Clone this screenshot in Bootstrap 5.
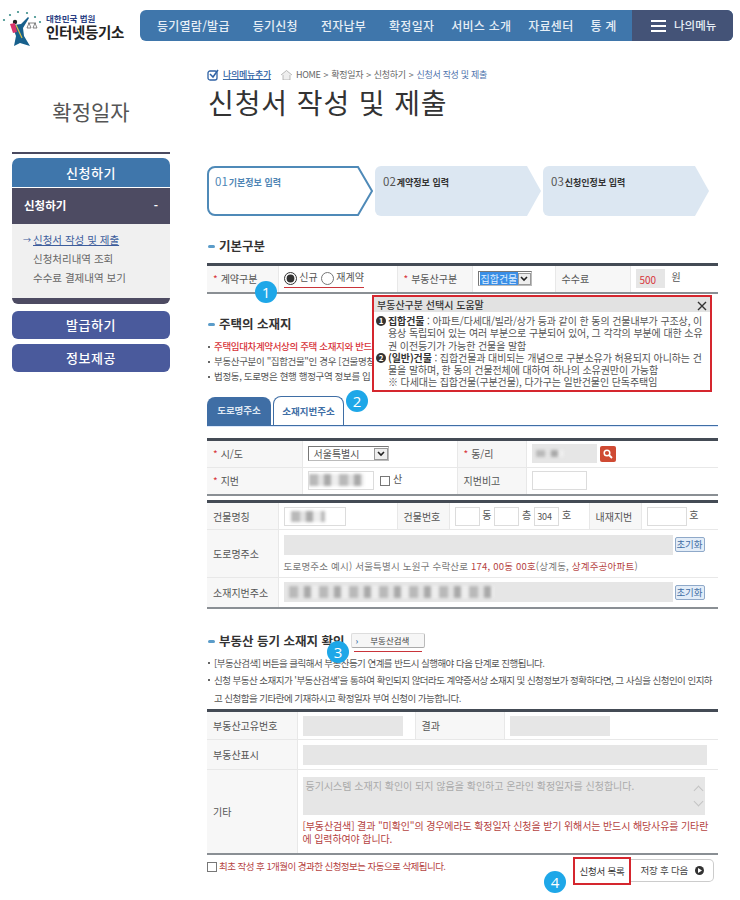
<!DOCTYPE html>
<html lang="ko">
<head>
    <meta charset="UTF-8">
    <meta name="viewport" content="width=device-width, initial-scale=1.0">
    <title>인터넷등기소 - 신청서 작성 및 제출</title>
    <link href="https://cdn.jsdelivr.net/npm/bootstrap@5.3.2/dist/css/bootstrap.min.css" rel="stylesheet">
    <style>
        body { width: 740px; height: 900px; overflow: hidden; font-family: "Noto Sans CJK KR", "Noto Sans", sans-serif; font-size: 10px; color: #555; background: #fff; }
        .site-top { height: 41px; margin-top: 10px; padding: 0 7px 0 2px; }
        .logo-box { width: 138px; height: 38px; margin-top: -2px; gap: 2px; }
        .logo-sub { font-size: 8.5px; font-weight: 700; color: #2b3f83; line-height: 10px; }
        .logo-name { font-size: 14.5px; font-weight: 700; color: #222; line-height: 18px; letter-spacing: -.35px; }
        .gnb { height: 31px; background: #3f76ab; border-radius: 6px; overflow: hidden; color: #e6eef6; font-size: 12px; font-weight: 500; }
        .gnb-items { padding-left: 17px; gap: 23px; letter-spacing: .25px; }
        .gnb-close { margin-left: -6px; }
        .gnb-my { width: 101px; background: #445377; padding-left: 19px; font-size: 11.5px; }
        .shell { padding: 0 22px 0 12px; }
        .side { width: 158px; margin-right: 37px; }
        .side-title { height: 94px; padding-top: 45px; font-size: 21px; color: #555; text-align: center; line-height: 30px; margin-bottom: 7px; }
        .side-line { height: 2px; background: #4a4a60; margin-bottom: 4px; }
        .side-head { height: 29px; line-height: 29px; border-radius: 7px 7px 0 0; background: #3f76ab; color: #fff; font-size: 13px; font-weight: 500; text-align: center; letter-spacing: .6px; }
        .side-sub { height: 37px; background: #4d4b62; color: #fff; font-size: 11.5px; font-weight: 700; padding: 0 12px; border-top: 1px solid #fff; }
        .side-list { height: 74px; background: #f0f0f0; padding: 6px 0 0 21px; font-size: 10.5px; line-height: 19px; color: #666; }
        .side-on { color: #3d5d9c; text-decoration: underline; position: relative; }
        .side-on::before { content: "→"; position: absolute; left: -10px; font-size: 8px; text-decoration: none; display: inline-block; }
        .side-end { height: 6px; background: #4d4b62; border-radius: 0 0 6px 6px; margin-bottom: 7px; }
        .side-btn { height: 28px; line-height: 28px; background: #4a5a9c; color: #fff; font-size: 13px; font-weight: 500; border-radius: 6px; text-align: center; margin-bottom: 5px; letter-spacing: .6px; }
        .content { width: 511px; position: relative; }
        .crumb { height: 14px; margin-top: 17px; font-size: 9px; line-height: 14px; letter-spacing: -.3px; color: #666; }
        .crumb-add { color: #2f62a5; text-decoration: underline; margin-right: 10px; font-weight: 500; }
        .crumb-sep { margin: 0 3px; }
        .crumb-now { color: #4f74ad; }
        .page-title { font-size: 28px; font-weight: 400; color: #333; margin: 2px 0 45px 1px; line-height: 37px; letter-spacing: .9px; }
        .steps { height: 50px; margin-bottom: 22px; gap: 2px; position: relative; z-index: 0; }
        .step-item { width: 166px; height: 50px; position: relative; padding: 7px 0 0 8px; color: #333; font-size: 9px; font-weight: 700; }
        .step-item svg { position: absolute; left: 0; top: 0; z-index: -1; }
        .step-num { font-size: 11.5px; font-weight: 400; color: #555; margin-right: 1px; }
        .step-on { color: #4f86b5; }
        .step-on .step-num { color: #4f86b5; }
        .sec-head { font-size: 12.5px; font-weight: 700; color: #333; line-height: 16px; padding-left: 12px; position: relative; white-space: nowrap; }
        .sec-head::before { content: ""; position: absolute; left: 1px; top: 7px; width: 7px; height: 3px; background: #5b9cc9; border-radius: 2px; }
        .sec-house { margin-top: 22px; margin-bottom: 7px; }
        .form-tbl { table-layout: fixed; width: 511px; margin: 0; border-top: 3px solid #444b55; border-bottom: 2px solid #8a8f94; font-size: 10px; color: #555; }
        .form-tbl > tbody > tr > * { padding: 0 5px; border: 1px solid #e8e8e8; vertical-align: middle; font-weight: 400; background: #fff; color: #555; white-space: nowrap; }
        .form-tbl > tbody > tr > *:first-child { border-left: 0; }
        .form-tbl > tbody > tr > *:last-child { border-right: 0; }
        .form-tbl > tbody > tr > th { background: #f7f7f7; padding-left: 6px; }
        .req { color: #d8343a; margin-right: 3px; }
        .r-28 { height: 28px; } .r-29 { height: 29px; } .r-30 { height: 30px; } .r-48 { height: 48px; } .r-84 { height: 84px; }
        .t1 .c1 { width: 71px; } .t1 .c2 { width: 119px; } .t1 .c3 { width: 75px; } .t1 .c4 { width: 83px; } .t1 .c5 { width: 75px; }
        .t2 .c1 { width: 95px; } .t2 .c2 { width: 155px; } .t2 .c3 { width: 69px; }
        .t3 .c1 { width: 71px; } .t3 .c2 { width: 119px; } .t3 .c3 { width: 52px; } .t3 .c4 { width: 140px; } .t3 .c5 { width: 52px; }
        .t4 .c1 { width: 90px; } .t4 .c2 { width: 118px; } .t4 .c3 { width: 89px; }
        .t1 { margin-top: 9px; }
        .t4 { margin-top: 2px; }
        .kind-radio { accent-color: #333; vertical-align: middle; margin: 0; }
        .red-line { border-bottom: 1px solid #c9343a; padding-bottom: 2px; display: inline-block; }
        .sel-box { display: inline-flex; align-items: center; border: 1px solid #777; border-right-color: #bbb; border-bottom-color: #bbb; height: 15px; background: #fff; padding-left: 1px; line-height: 13px; justify-content: space-between; }
        .sel-arrow { width: 14px; height: 12px; border: 1px solid #999; background: #eee; display: flex; align-items: center; justify-content: center; }
        .sel-pick { background: #3a8ee6; color: #dfefff; padding: 0 1px; }
        .sel-wide { width: 81px; } .sel-short { width: 54px; }
        .in-box { display: inline-block; vertical-align: middle; height: 19px; border: 1px solid #dcdcdc; background: #fff; font-size: 9px; line-height: 17px; padding-left: 2px; position: relative; overflow: hidden; }
        .in-off { background: #e6e6e6; border-color: #e6e6e6; }
        .in-20 { height: 20px; }
        .w-25px { width: 25px; } .w-40px { width: 40px; } .w-55px { width: 55px; } .w-62px { width: 62px; } .w-65px { width: 65px; } .w-66px { width: 66px; } .w-100px { width: 100px; } .w-389px { width: 389px; } .w-404px { width: 404px; }
        .smudge { position: absolute; display: block; filter: blur(1.5px); background: repeating-linear-gradient(90deg, #b9b9b9 0 9px, #e2e2e2 9px 15px, #a9a9a9 15px 22px, #eee 22px 30px); }
        .sm-dong { left: 3px; top: 5px; width: 28px; height: 7px; }
        .sm-jibun { left: 0; top: 2px; width: 55px; height: 12px; }
        .sm-name { left: 6px; top: 3px; width: 34px; height: 11px; }
        .sm-addr { left: 4px; top: 3px; width: 205px; height: 12px; }
        .fee { width: 29px; color: #d8343a; font-size: 10px; line-height: 19px; padding-left: 3px; margin-right: 7px; }
        .note-list { list-style: none; margin: 0; padding: 0 0 0 7px; font-size: 9.5px; line-height: 15px; letter-spacing: -.35px; color: #555; white-space: nowrap; }
        .note-list li { position: relative; }
        .note-list li::before { content: ""; position: absolute; left: -6px; top: 7px; width: 2px; height: 2px; background: #666; }
        .note-tall { line-height: 17.5px; letter-spacing: -.53px; margin-top: 6px; }
        .note-red { color: #d8343a; font-weight: 500; }
        .help-pop { position: absolute; left: 165px; top: 244px; width: 340px; height: 97px; border: 2px solid #d5262e; background: #fff; z-index: 5; color: #555; font-size: 10px; line-height: 12.3px; letter-spacing: -.1px; word-break: break-all; }
        .help-head { height: 15px; background: #e2e2e2; padding: 0 3px; font-size: 10px; line-height: 15px; font-weight: 500; color: #333; margin-bottom: 3px; letter-spacing: 0; }
        .help-body { padding: 0 3px 0 14px; position: relative; }
        .help-num { position: absolute; left: 2px; margin-top: 1px; width: 10px; height: 10px; border-radius: 50%; background: #333; color: #fff; font-size: 8px; line-height: 10px; text-align: center; font-weight: 700; }
        .help-body b { color: #333; }
        .tab-row { margin-top: 13px; height: 29px; border-bottom: 1px solid #3f6ea5; box-shadow: 0 1px 0 #dbe7fb; margin-bottom: 12px; gap: 2px; font-size: 9.5px; font-weight: 700; }
        .tab-off { width: 64px; height: 28px; background: #3f6ea5; color: #dfe8f3; border-radius: 8px 8px 0 0; text-align: center; line-height: 26px; }
        .tab-on { width: 71px; height: 29px; background: #fff; color: #3f6ea5; border: 1px solid #3f6ea5; border-bottom: 0; border-radius: 8px 8px 0 0; text-align: center; line-height: 28px; position: relative; z-index: 1; }
        .find-btn { display: inline-flex; width: 16px; height: 16px; margin-left: 3px; vertical-align: middle; background: #cf4a33; border-radius: 2px; align-items: center; justify-content: center; }
        .hint { font-size: 9.5px; color: #777; line-height: 14px; margin-top: 4px; white-space: nowrap; letter-spacing: .2px; }
        .hint-red { color: #b5433f; }
        .reset-btn { display: inline-block; width: 30px; height: 15px; border: 1px solid #8fa9c9; background: #e3edf8; font-size: 9.5px; line-height: 13px; color: #3f6ea5; text-align: center; border-radius: 2px; margin-left: 2px; vertical-align: middle; }
        .chk { display: inline-block; width: 10px; height: 10px; border: 1px solid #777; background: #fff; vertical-align: middle; }
        .search-row { margin-top: 24px; }
        .search-btn { width: 74px; height: 15px; border: 1px solid #ddd; border-bottom-color: #aaa; border-right-color: #bbb; border-radius: 2px; background: #f6f6f6; font-size: 8.5px; line-height: 13px; color: #444; padding-left: 4px; margin-left: 6px; position: relative; white-space: nowrap; }
        .search-mark { color: #3f76ab; font-weight: 700; margin-right: 12px; }
        .search-under { position: absolute; left: 2px; top: 17px; width: 68px; height: 1px; background: #c9343a; }
        .area-box { height: 38px; background: #e6e6e6; color: #aaa; font-size: 10px; line-height: 14px; padding: 2px 3px; position: relative; margin-bottom: 4px; width: 402px; }
        .area-arrow { position: absolute; right: 3px; width: 7px; height: 7px; border: solid #c4c4c4; border-width: 1px 0 0 1px; }
        .area-up { top: 10px; transform: rotate(45deg); }
        .area-down { bottom: 10px; transform: rotate(225deg); }
        .warn-red { color: #b5433f; font-size: 10px; line-height: 13px; white-space: normal; word-break: break-all; letter-spacing: -.12px; }
        .foot-row { padding-top: 2px; }
        .foot-note { color: #b5433f; font-size: 9.5px; letter-spacing: -.55px; padding-top: 2px; line-height: 14px; white-space: nowrap; }
        .list-btn { width: 58px; height: 28px; border: 2px solid #d5262e; font-size: 9.5px; line-height: 24px; text-align: center; color: #333; background: #fff; letter-spacing: -.2px; white-space: nowrap; }
        .next-btn { width: 83px; height: 23px; margin-top: 2px; border: 1px solid #ccc; border-left: 0; border-radius: 0 5px 5px 0; font-size: 9.5px; line-height: 21px; text-align: center; color: #444; letter-spacing: -.2px; white-space: nowrap; }
        .num-mark { position: absolute; width: 22px; height: 22px; border-radius: 50%; background: #1ea7e8; color: #fff; font-size: 15px; font-weight: 500; line-height: 22px; text-align: center; z-index: 6; font-family: "Open Sans", sans-serif; }
        .m1 { left: 48px; top: 230px; } .m2 { left: 139px; top: 339px; } .m3 { left: 120px; top: 590px; } .m4 { left: 337px; top: 820px; }
    </style>
</head>
<body>
    <header class="site-top d-flex">
        <div class="logo-box d-flex align-items-center">
            <svg width="42" height="38" viewBox="0 0 42 38">
                <g fill="#3c8f8a"><circle cx="2" cy="12" r="1.100"/><circle cx="8" cy="7" r="1.100"/><circle cx="16" cy="4" r="1.100"/><circle cx="25" cy="5" r="1.100"/><circle cx="33" cy="9" r="1.100"/><circle cx="38" cy="14" r="1.100"/></g>
                <circle cx="13" cy="14" r="2.200" fill="#222"/>
                <path d="M12 17l7-1 7-7 1 1-6 10 1 8 6 10-10-3-6 3 2-10-3-8z" fill="#17608c"/>
                <path d="M8 16l5-1 2 9-4 1z" fill="#d8346a"/>
                <path d="M14 17l6 13" stroke="#d9c24a" stroke-width="1.200"/>
                <path d="M26 15h8M27 15l-2 5h4zM33 15l-2 5h4z" fill="none" stroke="#555" stroke-width=".7"/>
            </svg>
            <div>
                <div class="logo-sub">대한민국 법원</div>
                <div class="logo-name">인터넷등기소</div>
            </div>
        </div>
        <nav class="gnb flex-grow-1 d-flex">
            <div class="gnb-items flex-grow-1 d-flex align-items-center">
                <span>등기열람/발급</span><span>등기신청</span><span>전자납부</span><span>확정일자</span><span class="gnb-close">서비스 소개</span><span class="gnb-close">자료센터</span><span class="gnb-close">통 계</span>
            </div>
            <div class="gnb-my d-flex align-items-center gap-2">
                <svg width="15" height="12" viewBox="0 0 15 12"><path d="M0 1h15M0 6h15M0 11h15" stroke="#fff" stroke-width="2"/></svg>
                <span>나의메뉴</span>
            </div>
        </nav>
    </header>

    <div class="shell d-flex">
        <aside class="side">
            <div class="side-title">확정일자</div>
            <div class="side-line"></div>
            <div class="side-head">신청하기</div>
            <div class="side-sub d-flex justify-content-between align-items-center"><span>신청하기</span><span>-</span></div>
            <div class="side-list">
                <div><span class="side-on">신청서 작성 및 제출</span></div>
                <div>신청처리내역 조회</div>
                <div>수수료 결제내역 보기</div>
            </div>
            <div class="side-end"></div>
            <div class="side-btn">발급하기</div>
            <div class="side-btn">정보제공</div>
        </aside>

        <main class="content">
            <div class="crumb d-flex align-items-center">
                <svg class="me-1" width="12" height="12" viewBox="0 0 12 12"><rect x="1" y="2" width="9" height="9" rx="2" fill="none" stroke="#2f62a5" stroke-width="1.300"/><path d="M3 5l3 3 5-7" fill="none" stroke="#2f62a5" stroke-width="1.500"/></svg>
                <span class="crumb-add">나의메뉴추가</span>
                <svg class="me-1" width="11" height="10" viewBox="0 0 11 10"><path d="M0 5l5.500-4.500 5.500 4.500M2 5v5h7v-5" fill="#eee" stroke="#aaa" stroke-width=".8"/></svg>
                <span>HOME<span class="crumb-sep">&gt;</span>확정일자<span class="crumb-sep">&gt;</span>신청하기<span class="crumb-sep">&gt;</span><span class="crumb-now">신청서 작성 및 제출</span></span>
            </div>
            <h1 class="page-title">신청서 작성 및 제출</h1>

            <div class="steps d-flex">
                <div class="step-item step-on">
                    <svg width="167" height="50" viewBox="0 0 167 50"><path d="M8 1h143l14 24-14 24h-143a7 7 0 0 1-7-7v-34a7 7 0 0 1 7-7z" fill="#fff" stroke="#4f8ab8" stroke-width="2"/></svg>
                    <span class="step-num">01</span>기본정보 입력
                </div>
                <div class="step-item">
                    <svg width="167" height="50" viewBox="0 0 167 50"><path d="M6 0h146l14 25-14 25h-146a6 6 0 0 1-6-6v-38a6 6 0 0 1 6-6z" fill="#dce7f2"/></svg>
                    <span class="step-num">02</span>계약정보 입력
                </div>
                <div class="step-item">
                    <svg width="167" height="50" viewBox="0 0 167 50"><path d="M6 0h146l14 25-14 25h-146a6 6 0 0 1-6-6v-38a6 6 0 0 1 6-6z" fill="#dce7f2"/></svg>
                    <span class="step-num">03</span>신청인정보 입력
                </div>
            </div>

            <div class="sec-head">기본구분</div>
            <table class="table form-tbl t1">
                <colgroup><col class="c1"><col class="c2"><col class="c3"><col class="c4"><col class="c5"><col></colgroup>
                <tbody>
                    <tr class="r-28">
                        <th><span class="req">*</span>계약구분</th>
                        <td><span class="red-line"><input type="radio" name="kind" checked class="kind-radio"> 신규 <input type="radio" name="kind" class="kind-radio"> 재계약</span></td>
                        <th><span class="req">*</span>부동산구분</th>
                        <td><span class="sel-box sel-short"><span class="sel-pick">집합건물</span><span class="sel-arrow"><svg width="8" height="6" viewBox="0 0 8 6"><path d="M1 1l3 3 3-3" fill="none" stroke="#222" stroke-width="1.600"/></svg></span></span></td>
                        <th>수수료</th>
                        <td><span class="in-box in-off fee">500</span>원</td>
                    </tr>
                </tbody>
            </table>

            <div class="sec-head sec-house">주택의 소재지</div>
            <ul class="note-list">
                <li class="note-red">주택임대차계약서상의 주택 소재지와 반드</li>
                <li>부동산구분이 "집합건물"인 경우 [건물명칭</li>
                <li>법정동, 도로명은 현행 행정구역 정보를 입</li>
            </ul>

            <div class="help-pop">
                <div class="help-head d-flex justify-content-between"><span>부동산구분 선택시 도움말</span><svg class="mt-1" width="10" height="10" viewBox="0 0 10 10"><path d="M1 1l8 8M9 1l-8 8" stroke="#333" stroke-width="1.400"/></svg></div>
                <div class="help-body"><span class="help-num">1</span><b>집합건물</b> : 아파트/다세대/빌라/상가 등과 같이 한 동의 건물내부가 구조상, 이용상 독립되어 있는 여러 부분으로 구분되어 있어, 그 각각의 부분에 대한 소유권 이전등기가 가능한 건물을 말함</div>
                <div class="help-body"><span class="help-num">2</span><b>(일반)건물</b> : 집합건물과 대비되는 개념으로 구분소유가 허용되지 아니하는 건물을 말하며, 한 동의 건물전체에 대하여 하나의 소유권만이 가능함<br>※ 다세대는 집합건물(구분건물), 다가구는 일반건물인 단독주택임</div>
            </div>
            <span class="num-mark m1">1</span>
            <span class="num-mark m2">2</span>

            <div class="tab-row d-flex align-items-end">
                <div class="tab-off">도로명주소</div>
                <div class="tab-on">소재지번주소</div>
            </div>

            <table class="table form-tbl t2">
                <colgroup><col class="c1"><col class="c2"><col class="c3"><col></colgroup>
                <tbody>
                    <tr class="r-28">
                        <th><span class="req">*</span>시/도</th>
                        <td><span class="sel-box sel-wide"><span class="flex-grow-1 ps-1">서울특별시</span><span class="sel-arrow"><svg width="8" height="6" viewBox="0 0 8 6"><path d="M1 1l3 3 3-3" fill="none" stroke="#222" stroke-width="1.600"/></svg></span></span></td>
                        <th><span class="req">*</span>동/리</th>
                        <td><span class="in-box in-off w-65px"><i class="smudge sm-dong"></i></span><span class="find-btn"><svg width="10" height="10" viewBox="0 0 10 10"><circle cx="4" cy="4" r="2.800" fill="none" stroke="#fff" stroke-width="1.500"/><path d="M6 6l3 3" stroke="#fff" stroke-width="1.800"/></svg></span></td>
                    </tr>
                    <tr class="r-28">
                        <th><span class="req">*</span>지번</th>
                        <td><span class="in-box w-66px"><i class="smudge sm-jibun"></i></span> <span class="chk ms-1"></span> 산</td>
                        <th>지번비고</th>
                        <td><span class="in-box w-55px"></span></td>
                    </tr>
                </tbody>
            </table>

            <table class="table form-tbl t3 mt-1">
                <colgroup><col class="c1"><col class="c2"><col class="c3"><col class="c4"><col class="c5"><col></colgroup>
                <tbody>
                    <tr class="r-28">
                        <th>건물명칭</th>
                        <td><span class="in-box w-62px"><i class="smudge sm-name"></i></span></td>
                        <th>건물번호</th>
                        <td><span class="in-box w-25px"></span> 동 <span class="in-box w-25px"></span> 층 <span class="in-box w-25px">304</span> 호</td>
                        <th>내재지번</th>
                        <td><span class="in-box w-40px"></span> 호</td>
                    </tr>
                    <tr class="r-48">
                        <th>도로명주소</th>
                        <td colspan="5">
                            <span class="in-box in-off in-20 w-389px"></span><span class="reset-btn">초기화</span>
                            <div class="hint">도로명주소 예시) 서울특별시 노원구 수락산로 <span class="hint-red">174, 00동 00호</span>(상계동, <span class="hint-red">상계주공아파트</span>)</div>
                        </td>
                    </tr>
                    <tr class="r-30">
                        <th>소재지번주소</th>
                        <td colspan="5"><span class="in-box in-off in-20 w-389px"><i class="smudge sm-addr"></i></span><span class="reset-btn">초기화</span></td>
                    </tr>
                </tbody>
            </table>

            <div class="search-row d-flex align-items-center">
                <div class="sec-head">부동산 등기 소재지 확인</div>
                <div class="search-btn"><span class="search-mark">›</span>부동산검색<span class="search-under"></span></div>
            </div>
            <span class="num-mark m3">3</span>
            <ul class="note-list note-tall">
                <li>[부동산검색] 버튼을 클릭해서 부동산등기 연계를 반드시 실행해야 다음 단계로 진행됩니다.</li>
                <li>신청 부동산 소재지가 '부동산검색'을 통하여 확인되지 않더라도 계약증서상 소재지 및 신청정보가 정확하다면, 그 사실을 신청인이 인지하<br>고 신청함을 기타란에 기재하시고 확정일자 부여 신청이 가능합니다.</li>
            </ul>

            <table class="table form-tbl t4">
                <colgroup><col class="c1"><col class="c2"><col class="c3"><col></colgroup>
                <tbody>
                    <tr class="r-29">
                        <th>부동산고유번호</th>
                        <td><span class="in-box in-off in-20 w-100px"></span></td>
                        <th>결과</th>
                        <td><span class="in-box in-off in-20 w-100px"></span></td>
                    </tr>
                    <tr class="r-30">
                        <th>부동산표시</th>
                        <td colspan="3"><span class="in-box in-off in-20 w-404px"></span></td>
                    </tr>
                    <tr class="r-84">
                        <th>기타</th>
                        <td colspan="3">
                            <div class="area-box">등기시스템 소재지 확인이 되지 않음을 확인하고 온라인 확정일자를 신청합니다.<span class="area-arrow area-up"></span><span class="area-arrow area-down"></span></div>
                            <div class="warn-red">[부동산검색] 결과 "미확인"의 경우에라도 확정일자 신청을 받기 위해서는 반드시 해당사유를 기타란에 입력하여야 합니다.</div>
                        </td>
                    </tr>
                </tbody>
            </table>

            <div class="foot-row d-flex justify-content-between">
                <div class="foot-note"><span class="chk"></span> 최초 작성 후 1개월이 경과한 신청정보는 자동으로 삭제됩니다.</div>
                <div class="d-flex me-1">
                    <div class="list-btn">신청서 목록</div>
                    <div class="next-btn">저장 후 다음 <svg class="ms-1" width="9" height="9" viewBox="0 0 9 9"><circle cx="4.500" cy="4.500" r="4.500" fill="#333"/><path d="M3 2l4 2.500-4 2.500z" fill="#fff"/></svg></div>
                </div>
            </div>
            <span class="num-mark m4">4</span>
        </main>
    </div>

    <script src="https://cdn.jsdelivr.net/npm/bootstrap@5.3.2/dist/js/bootstrap.bundle.min.js"></script>
</body>
</html>
